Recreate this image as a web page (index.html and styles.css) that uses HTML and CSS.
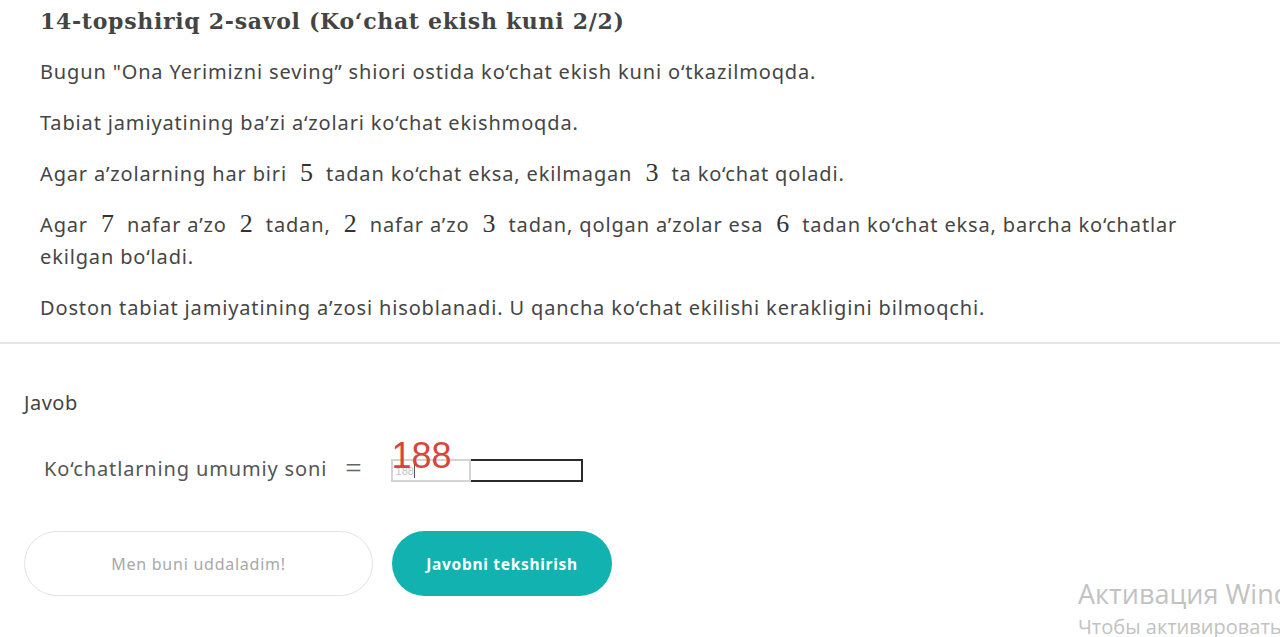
FILE: index.html
```html
<!DOCTYPE html>
<html lang="uz">
<head>
<meta charset="utf-8">
<title>14-topshiriq 2-savol</title>
<link rel="stylesheet" href="styles.css">
</head>
<body>
<div class="page">
  <section class="task">
    <h1 class="title">14-topshiriq 2-savol (Ko‘chat ekish kuni 2/2)</h1>
    <p class="para">Bugun "Ona Yerimizni seving” shiori ostida ko‘chat ekish kuni o‘tkazilmoqda.</p>
    <p class="para">Tabiat jamiyatining ba’zi a‘zolari ko‘chat ekishmoqda.</p>
    <p class="para">Agar a’zolarning har biri <span class="math">5</span> tadan ko‘chat eksa, ekilmagan <span class="math">3</span> ta ko‘chat qoladi.</p>
    <p class="para">Agar <span class="math">7</span> nafar a’zo <span class="math">2</span> tadan, <span class="math">2</span> nafar a’zo <span class="math">3</span> tadan, qolgan a’zolar esa <span class="math">6</span> tadan ko‘chat eksa, barcha ko‘chatlar ekilgan bo‘ladi.</p>
    <p class="para">Doston tabiat jamiyatining a’zosi hisoblanadi. U qancha ko‘chat ekilishi kerakligini bilmoqchi.</p>
  </section>
  <div class="divider"></div>
  <section class="answer">
    <div class="label">Javob</div>
    <div class="row">
      <span class="row-text">Ko‘chatlarning umumiy soni</span>
      <span class="math eq">=</span>
      <span class="field">
        <span class="field-input"><span class="typed">188</span><span class="caret"></span></span>
        <span class="note">188</span>
      </span>
    </div>
    <div class="buttons">
      <button class="btn btn-ghost">Men buni uddaladim!</button>
      <button class="btn btn-primary">Javobni tekshirish</button>
    </div>
  </section>
  <div class="watermark">
    <div class="wm-title">Активация Windows</div>
    <div class="wm-sub">Чтобы активировать Windows, перейдите в раздел «Параметры».</div>
  </div>
</div>
</body>
</html>
```
FILE: styles.css
```css
html, body {
  margin: 0;
  padding: 0;
  background: #ffffff;
}
.page {
  position: relative;
  width: 1280px;
  height: 637px;
  overflow: hidden;
  font-family: "Noto Sans", "Lato", sans-serif;
  color: #444444;
}
.task {
  padding: 0 40px;
}
.title {
  margin: 5px 0 0;
  font-family: "DejaVu Serif", serif;
  font-weight: bold;
  font-size: 22px;
  line-height: 32px;
  color: #444444;
  letter-spacing: 0.7px;
}
.para {
  margin: 19px 0 0;
  font-size: 20px;
  line-height: 32px;
  letter-spacing: 0.85px;
  color: #454545;
}
.math {
  font-family: "Liberation Serif", "DejaVu Serif", serif;
  font-size: 26px;
  line-height: 20px;
  letter-spacing: 0;
  margin: 0 7px;
  color: #333;
}
.divider {
  margin-top: 18px;
  height: 2px;
  background: #e6e6e6;
}
.answer {
  padding: 0 24px;
}
.label {
  margin-top: 43px;
  font-size: 20px;
  line-height: 32px;
  letter-spacing: 0.5px;
  color: #444;
}
.row {
  margin-top: 33px;
  padding-left: 20px;
  display: flex;
  align-items: center;
  height: 32px;
  font-size: 20px;
  letter-spacing: 0.85px;
  color: #555;
}
.eq {
  margin: 0 29px 0 18px;
  font-size: 29px;
  color: #666;
}
.field {
  position: relative;
  display: flex;
  width: 190px;
  height: 19px;
  margin-top: 5px;
  border: 2px solid #2a2a2a;
  border-left: none;
}
.field-input {
  display: flex;
  align-items: center;
  width: 73px;
  height: 19px;
  margin: -2px 0 0 0;
  border: 2px solid #d4d4d4;
  background: #fff;
  font-family: "Liberation Sans", sans-serif;
  font-size: 11px;
  letter-spacing: 0;
  color: #c4c4c4;
  padding-left: 3px;
}
.caret {
  width: 1px;
  height: 14px;
  background: #555;
}
.note {
  position: absolute;
  left: 1px;
  top: -23px;
  font-family: "Liberation Sans", sans-serif;
  font-size: 36px;
  line-height: 36px;
  letter-spacing: 0;
  color: #d8453b;
}
.buttons {
  margin-top: 47px;
  display: flex;
  gap: 19px;
}
.btn {
  height: 65px;
  border-radius: 33px;
  font-family: "Noto Sans", "Lato", sans-serif;
  font-size: 16px;
  letter-spacing: 0.75px;
  cursor: pointer;
}
.btn-ghost {
  width: 349px;
  background: #fff;
  border: 1.5px solid #e3e3e3;
  color: #a8a8a8;
}
.btn-primary {
  width: 220px;
  background: #12b2b0;
  border: none;
  color: #fff;
  font-weight: bold;
  font-size: 15.5px;
  letter-spacing: 0.7px;
}
.watermark {
  position: absolute;
  left: 1078px;
  top: 576px;
  white-space: nowrap;
  font-family: "Open Sans", "Noto Sans", sans-serif;
  color: #c2c2c2;
}
.wm-title {
  font-size: 27px;
  line-height: 36px;
}
.wm-sub {
  font-size: 20px;
  line-height: 30px;
}
```
